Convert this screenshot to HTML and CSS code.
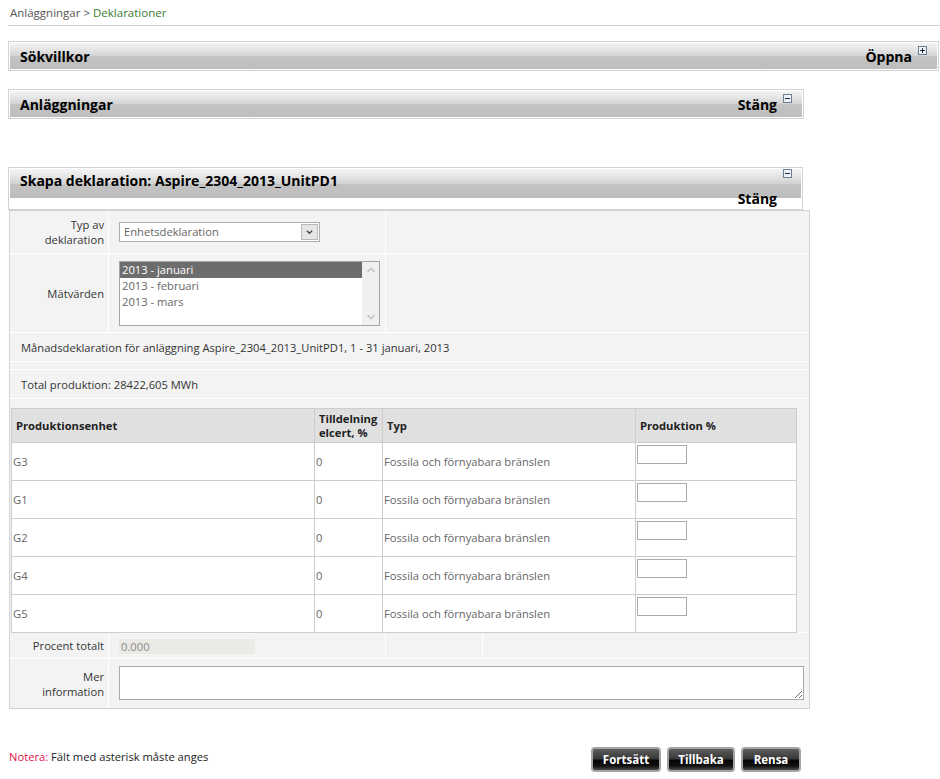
FILE: index.html
```html
<!DOCTYPE html>
<html lang="sv">
<head>
<meta charset="utf-8">
<title>Deklarationer</title>
<link rel="stylesheet" href="styles.css">
</head>
<body>
<div class="page">
  <div class="crumbs">Anläggningar &gt; <a href="#">Deklarationer</a></div>

  <section class="panel panel-1">
    <div class="panel-head">
      <h2>Sökvillkor</h2>
      <span class="toggle">Öppna
        <svg class="icon" viewBox="0 0 9 9"><rect x="0.5" y="0.5" width="8" height="8" fill="#eef1f5" stroke="#6d7f95"/><path d="M2 4.5h5M4.5 2v5" stroke="#1e2a38" stroke-width="1"/></svg>
      </span>
    </div>
  </section>

  <section class="panel panel-2">
    <div class="panel-head">
      <h2>Anläggningar</h2>
      <span class="toggle">Stäng
        <svg class="icon" viewBox="0 0 9 9"><rect x="0.5" y="0.5" width="8" height="8" fill="#eef1f5" stroke="#6d7f95"/><path d="M2 4.5h5" stroke="#1e2a38" stroke-width="1"/></svg>
      </span>
    </div>
  </section>

  <section class="panel panel-3">
    <div class="panel-head tall">
      <h2>Skapa deklaration: Aspire_2304_2013_UnitPD1</h2>
      <svg class="icon icon-top" viewBox="0 0 9 9"><rect x="0.5" y="0.5" width="8" height="8" fill="#eef1f5" stroke="#6d7f95"/><path d="M2 4.5h5" stroke="#1e2a38" stroke-width="1"/></svg>
      <span class="toggle-text">Stäng</span>
    </div>
  </section>

  <div class="form">
    <div class="cell label">Typ av<br>deklaration</div>
    <div class="cell field">
      <div class="select">
        <span class="select-value">Enhetsdeklaration</span>
        <span class="select-arrow"><svg viewBox="0 0 16 16" width="16" height="16"><path d="M5 6.5l3 3 3-3" fill="none" stroke="#4a4a4a" stroke-width="1.6"/></svg></span>
      </div>
    </div>
    <div class="cell span-2"></div>

    <div class="cell label">Mätvärden</div>
    <div class="cell field top">
      <div class="listbox">
        <div class="options">
          <div class="option sel">2013 - januari</div>
          <div class="option">2013 - februari</div>
          <div class="option">2013 - mars</div>
        </div>
        <div class="scrollbar">
          <svg viewBox="0 0 16 16" width="16" height="16"><path d="M4.5 10l3.5-3.5 3.5 3.5" fill="none" stroke="#c4c4c4" stroke-width="1.6"/></svg>
          <svg viewBox="0 0 16 16" width="16" height="16"><path d="M4.5 6l3.5 3.5 3.5-3.5" fill="none" stroke="#c4c4c4" stroke-width="1.6"/></svg>
        </div>
      </div>
    </div>
    <div class="cell span-2"></div>

    <div class="cell full text-row">Månadsdeklaration för anläggning Aspire_2304_2013_UnitPD1, 1 - 31 januari, 2013</div>
    <div class="cell full"></div>
    <div class="cell full text-row">Total produktion: 28422,605 MWh</div>

    <div class="cell full table-cell">
      <table class="units">
        <colgroup><col class="c1"><col class="c2"><col class="c3"><col class="c4"></colgroup>
        <thead>
          <tr><th>Produktionsenhet</th><th>Tilldelning<br>elcert, %</th><th>Typ</th><th>Produktion %</th></tr>
        </thead>
        <tbody>
          <tr><td>G3</td><td>0</td><td>Fossila och förnyabara bränslen</td><td class="in"><input class="pct" type="text"></td></tr>
          <tr><td>G1</td><td>0</td><td>Fossila och förnyabara bränslen</td><td class="in"><input class="pct" type="text"></td></tr>
          <tr><td>G2</td><td>0</td><td>Fossila och förnyabara bränslen</td><td class="in"><input class="pct" type="text"></td></tr>
          <tr><td>G4</td><td>0</td><td>Fossila och förnyabara bränslen</td><td class="in"><input class="pct" type="text"></td></tr>
          <tr><td>G5</td><td>0</td><td>Fossila och förnyabara bränslen</td><td class="in"><input class="pct" type="text"></td></tr>
        </tbody>
      </table>
    </div>

    <div class="cell label">Procent totalt</div>
    <div class="cell field"><span class="readonly">0.000</span></div>
    <div class="cell"></div>
    <div class="cell"></div>

    <div class="cell label">Mer<br>information</div>
    <div class="cell field top span-3"><textarea class="more"></textarea></div>
  </div>

  <div class="footer">
    <p class="note"><span class="note-key">Notera:</span> Fält med asterisk måste anges</p>
    <div class="buttons">
      <button class="btn btn-go">Fortsätt</button>
      <button class="btn btn-back">Tillbaka</button>
      <button class="btn btn-clear">Rensa</button>
    </div>
  </div>
</div>
</body>
</html>
```

FILE: styles.css
```css
body {
  margin: 0;
  font-family: "Open Sans", "Noto Sans", sans-serif;
  font-size: 11.2px;
  color: #333;
  background: #fff;
}

.page {
  padding-top: 5px;
}

.crumbs {
  margin-left: 8px;
  padding: 0 0 4px 2px;
  line-height: 16px;
  font-size: 11.5px;
  border-bottom: 1px solid #cfcfcf;
  color: #555;
}

.crumbs a {
  color: #3a7d33;
  text-decoration: none;
}

.panel {
  box-sizing: border-box;
  margin-left: 8px;
  border: 1px solid #d2d2d2;
  padding: 1px;
  background: #fff;
}

.panel-1 { width: 931px; margin-top: 15px; }
.panel-2 { width: 796px; margin-top: 18px; }
.panel-3 { width: 795px; margin-top: 48px; }

.panel-head {
  display: flex;
  justify-content: space-between;
  align-items: flex-start;
  height: 26px;
  padding: 0 10px;
  background: linear-gradient(to bottom, #f4f4f4 0%, #e2e2e2 30%, #d2d2d2 50%, #c3c3c3 52%, #bdbdbd 100%);
}

.panel-head h2 {
  margin: 0;
  padding-top: 1px;
  font-size: 14px;
  font-weight: 700;
  line-height: 26px;
  color: #000;
}

.toggle {
  display: flex;
  align-items: flex-start;
  gap: 6px;
  padding-top: 1px;
  font-size: 14px;
  font-weight: 700;
  line-height: 26px;
  color: #000;
}

.icon {
  width: 9px;
  height: 9px;
  margin-top: 2px;
  flex: none;
}

.panel-head.tall {
  display: grid;
  grid-template-columns: 1fr auto;
  column-gap: 6px;
  height: auto;
  padding: 0 9px 1px 10px;
  background-color: #fff;
  background-repeat: no-repeat;
  background-size: 100% 29px;
}

.panel-head.tall h2 {
  padding-top: 2px;
  line-height: 20px;
}

.icon-top {
  grid-column: 2;
  grid-row: 1;
  margin-top: 0;
}

.toggle-text {
  grid-column: 1;
  grid-row: 2;
  justify-self: end;
  font-size: 14px;
  font-weight: 700;
  line-height: 16px;
  color: #000;
}

/* form grid */
.form {
  box-sizing: border-box;
  width: 801px;
  margin-left: 9px;
  border: 1px solid #d2d2d2;
  background: #fff;
  display: grid;
  grid-template-columns: 98px 276px 96px 326px;
  grid-template-rows: 42px 78px 28px 7px 28px 233px 25px 49px;
  gap: 1px;
}

.cell {
  background: #f3f3f3;
  min-width: 0;
}

.span-2 { grid-column: span 2; }
.span-3 { grid-column: span 3; }
.full { grid-column: 1 / -1; }

.label {
  display: flex;
  align-items: center;
  justify-content: flex-end;
  text-align: right;
  padding-right: 4px;
  line-height: 15px;
  color: #333;
}

.field {
  display: flex;
  align-items: center;
  padding-left: 10px;
}

.field.top {
  align-items: flex-start;
  padding-top: 7px;
}

.text-row {
  display: flex;
  align-items: center;
  padding-left: 11px;
  color: #333;
}

.select {
  box-sizing: border-box;
  width: 201px;
  height: 20px;
  border: 1px solid #a9aeb4;
  background: #fff;
  display: flex;
  align-items: center;
}

.select-value {
  flex: 1;
  padding-left: 4px;
  color: #666;
  line-height: 18px;
}

.select-arrow {
  box-sizing: border-box;
  width: 17px;
  height: 16px;
  margin-right: 1px;
  border: 1px solid #b8b8b8;
  background: #e6e6e6;
  display: flex;
  align-items: center;
  justify-content: center;
}

.select-arrow svg {
  width: 15px;
  height: 14px;
}

.listbox {
  box-sizing: border-box;
  width: 261px;
  height: 65px;
  border: 1px solid #a5a5a5;
  background: #fff;
  display: flex;
}

.options {
  flex: 1;
}

.option {
  line-height: 16px;
  padding-left: 2px;
  color: #666;
}

.option.sel {
  background: #6d6d6d;
  color: #fff;
}

.scrollbar {
  width: 17px;
  background: #f0f0f0;
  display: flex;
  flex-direction: column;
  justify-content: space-between;
  align-items: center;
}

/* units table */
.table-cell {
  padding-top: 9px;
}

.units {
  border-collapse: collapse;
  width: 785px;
  margin-left: 1px;
  background: #fff;
  table-layout: fixed;
}

.units .c1 { width: 303px; }
.units .c2 { width: 68px; }
.units .c3 { width: 253px; }
.units .c4 { width: 161px; }

.units th,
.units td {
  border: 1px solid #cdcdcd;
}

.units th {
  height: 33px;
  padding: 0 4px;
  background: #e0e0e0;
  text-align: left;
  font-weight: 700;
  line-height: 14px;
  color: #222;
}

.units td {
  height: 37px;
  padding: 0 1px;
  color: #666;
  vertical-align: middle;
}

.units td.in {
  vertical-align: top;
}

.pct {
  display: block;
  box-sizing: border-box;
  width: 50px;
  height: 19px;
  border: 1px solid #aaa;
  background: #fff;
  margin: 2px 0 0;
}

.readonly {
  box-sizing: border-box;
  width: 136px;
  height: 15px;
  margin-top: 1px;
  padding-left: 2px;
  line-height: 15px;
  background: #ebeae5;
  color: #888;
}

.more {
  box-sizing: border-box;
  display: block;
  width: 685px;
  height: 34px;
  margin: 0;
  border: 1px solid #a9a9a9;
  background: #fff;
  font-family: inherit;
  font-size: 12px;
}

/* footer */
.footer {
  display: flex;
  align-items: flex-start;
  justify-content: space-between;
  width: 792px;
  margin: 38px 0 0 9px;
}

.note {
  margin: 0;
  padding-top: 1px;
  line-height: 18px;
  color: #222;
}

.note-key {
  color: #e3124b;
}

.buttons {
  display: flex;
  gap: 6px;
}

.btn {
  box-sizing: border-box;
  height: 25px;
  padding: 0;
  border: 2px solid #a4a4a4;
  border-radius: 4px;
  background: linear-gradient(to bottom, #5c5c5c 0%, #3a3a3a 45%, #050505 55%, #111 80%, #4a4a4a 100%);
  color: #fff;
  font-family: inherit;
  font-size: 11.5px;
  font-weight: 700;
  line-height: 19px;
  cursor: pointer;
}

.btn-go { width: 70px; }
.btn-back { width: 68px; }
.btn-clear { width: 60px; }
```
